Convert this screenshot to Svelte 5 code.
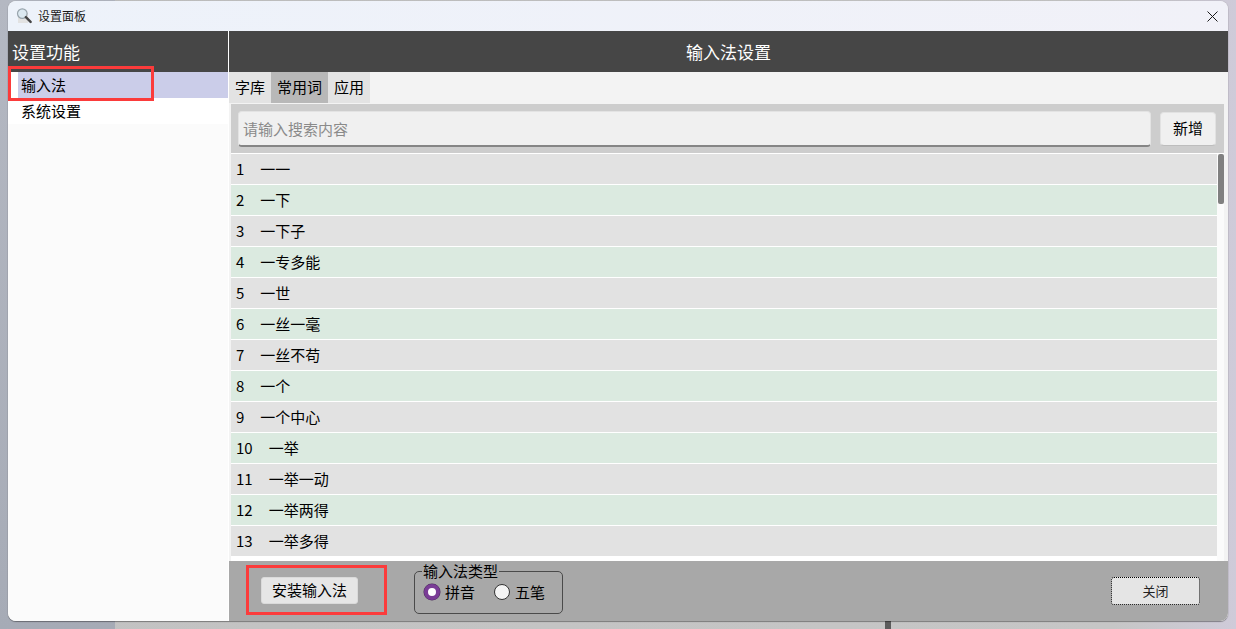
<script>
  const words = ['一一','一下','一下子','一专多能','一世','一丝一毫','一丝不苟','一个','一个中心','一举','一举一动','一举两得','一举多得'];
</script>

<div class="desk">
  <div class="bg-left"></div>
  <div class="stub"></div>
  <div class="window">
    <div class="titlebar">
      <svg class="appicon" viewBox="0 0 16 16" width="16" height="16" aria-hidden="true">
        <path d="M2 5h10v10H2z" fill="#e2e2e2"/>
        <circle cx="6.3" cy="5.6" r="4.8" fill="#dbe8f0" stroke="#98a4ac" stroke-width="1.2"/>
        <path d="M9.9 9.2 14.6 13.9" stroke="#454545" stroke-width="2.4" stroke-linecap="round"/>
      </svg>
      <span class="wintitle">设置面板</span>
      <svg class="closeicon" viewBox="0 0 11 11" width="11" height="11" aria-hidden="true">
        <path d="M.5.5 10.5 10.5M10.5.5.5 10.5" stroke="#1a1a1a" stroke-width="1" fill="none"/>
      </svg>
    </div>
    <div class="body">
      <aside class="side">
        <div class="sidehead">设置功能</div>
        <div class="navitem active"><span class="navlabel">输入法</span></div>
        <div class="navitem"><span class="navlabel">系统设置</span></div>
      </aside>
      <main class="main">
        <div class="mainhead">输入法设置</div>
        <div class="tabs">
          <div class="tab">字库</div>
          <div class="tab on">常用词</div>
          <div class="tab">应用</div>
        </div>
        <div class="panel">
          <div class="search">
            <div class="input">请输入搜索内容</div>
            <div class="addbtn">新增</div>
          </div>
          <div class="listwrap">
            <div class="list">
              {#each words as w, i}
                <div class="row" class:green={i % 2 === 1}><span class="num">{i + 1}</span><span>{w}</span></div>
              {/each}
            </div>
            <div class="scroll"><div class="thumb"></div></div>
          </div>
        </div>
        <div class="footer">
          <div class="install">安装输入法</div>
          <fieldset class="group">
            <legend>输入法类型</legend>
            <div class="radios">
              <div class="radio"><span class="dot checked"></span><span>拼音</span></div>
              <div class="radio"><span class="dot"></span><span>五笔</span></div>
            </div>
          </fieldset>
          <div class="closebtn">关闭</div>
        </div>
      </main>
    </div>
    <div class="mark mark1"></div>
    <div class="mark mark2"></div>
  </div>
</div>

<style>
  :global(body) {
    margin: 0;
    font-family: "Noto Sans CJK SC", "Noto Sans", sans-serif;
  }
  .desk {
    position: relative;
    width: 1236px;
    height: 629px;
    overflow: hidden;
    background: linear-gradient(90deg, #c2c2c2 0%, #c6c6c6 90%, #cfcbd9 100%);
    padding: 1px 8px 0;
    box-sizing: border-box;
  }
  .bg-left {
    position: absolute;
    left: 0;
    top: 0;
    width: 115px;
    height: 629px;
    background: linear-gradient(180deg, #b4b8c2, #a6abb6);
  }
  .stub {
    position: absolute;
    left: 885px;
    top: 620px;
    width: 6px;
    height: 9px;
    background: #5c5c5c;
  }
  .window {
    position: relative;
    width: 1220px;
    height: 620px;
    border-radius: 8px;
    overflow: hidden;
    background: #fbfbfb;
    box-shadow: 0 1px 1px rgba(0, 0, 0, .35), 0 0 1px rgba(0, 0, 0, .35);
    display: flex;
    flex-direction: column;
  }
  .titlebar {
    height: 30px;
    flex: none;
    display: flex;
    align-items: center;
    background: linear-gradient(90deg, #edf2fa, #f1f1f8);
    padding-left: 8px;
    box-sizing: border-box;
  }
  .appicon { flex: none; }
  .wintitle {
    margin-left: 6px;
    font-size: 12px;
    line-height: 26px;
    color: #1a1a1a;
  }
  .closeicon {
    margin-left: auto;
    margin-right: 10px;
  }
  .body {
    flex: 1;
    display: flex;
    min-height: 0;
  }
  .side {
    width: 220px;
    flex: none;
    border-right: 1px solid #fff;
    background: #fbfbfb;
  }
  .sidehead {
    height: 41px;
    background: #464646;
    color: #fff;
    font-size: 17px;
    line-height: 42px;
    padding-left: 4px;
  }
  .navitem {
    height: 26px;
    background: #fff;
    padding-left: 10px;
    font-size: 15px;
    line-height: 26px;
    color: #000;
  }
  .navlabel {
    display: block;
    padding-left: 3px;
  }
  .active .navlabel { background: #cbcde9; }
  .main {
    flex: 1;
    min-width: 0;
    display: flex;
    flex-direction: column;
    background: #f3f3f3;
  }
  .mainhead {
    height: 41px;
    flex: none;
    background: #464646;
    color: #fff;
    font-size: 17px;
    line-height: 42px;
    text-align: center;
  }
  .tabs {
    display: flex;
    height: 31px;
    flex: none;
  }
  .tab {
    width: 42px;
    background: #e3e3e3;
    font-size: 15px;
    line-height: 29px;
    text-align: center;
    color: #000;
  }
  .tab.on {
    width: 57px;
    background: #b8b8b8;
  }
  .panel {
    flex: none;
    height: 457px;
    margin: 1px 4px 0 2px;
    background: #fff;
    display: flex;
    flex-direction: column;
  }
  .search {
    height: 49px;
    flex: none;
    background: #cdcdcd;
    display: flex;
    align-items: center;
    padding: 0 8px 0 7px;
    box-sizing: border-box;
  }
  .input {
    flex: 1;
    height: 36px;
    background: #f0f0f0;
    border-radius: 4px;
    border: 1px solid #e3e3e3;
    border-bottom: 2px solid #858585;
    box-sizing: border-box;
    padding-left: 4px;
    font-size: 15px;
    line-height: 34px;
    color: #8a8a8a;
  }
  .addbtn {
    width: 56px;
    height: 34px;
    margin-left: 9px;
    background: #f0f0f0;
    border: 1px solid #e2e2e2;
    border-bottom-color: #bdbdbd;
    border-radius: 4px;
    box-sizing: border-box;
    font-size: 15px;
    line-height: 30px;
    text-align: center;
    color: #000;
  }
  .listwrap {
    flex: 1;
    margin-top: 1px;
    display: flex;
    min-height: 0;
  }
  .list {
    flex: 1;
    min-width: 0;
    display: flex;
    flex-direction: column;
    gap: 1px;
  }
  .row {
    height: 30px;
    flex: none;
    background: #e2e2e2;
    display: flex;
    align-items: flex-start;
    padding-left: 5px;
    box-sizing: border-box;
    font-size: 15px;
    line-height: 29px;
    color: #000;
  }
  .row.green { background: #dbeae0; }
  .num { margin-right: 16px; }
  .scroll {
    width: 7px;
    flex: none;
    background: #fbfbfb;
  }
  .thumb {
    width: 6px;
    height: 50px;
    margin-left: 1px;
    border-radius: 2px;
    background: #808080;
  }
  .footer {
    flex: 1;
    background: #a8a8a8;
    display: flex;
    align-items: flex-start;
  }
  .install {
    width: 97px;
    height: 27px;
    margin: 16px 0 0 32px;
    background: #e6e6e6;
    border: 1px solid #dadada;
    border-radius: 3px;
    box-sizing: border-box;
    font-size: 15px;
    line-height: 23px;
    text-align: center;
    color: #000;
  }
  .group {
    width: 149px;
    height: 50px;
    margin: 3px 0 0 56px;
    padding: 0 0 0 9px;
    border: 1px solid #4a4a4a;
    border-radius: 5px;
    box-sizing: border-box;
    min-inline-size: 0;
  }
  legend {
    padding: 0 1px;
    margin-left: -2px;
    font-size: 15px;
    line-height: 14px;
    color: #000;
  }
  .radios {
    display: flex;
    gap: 19px;
    margin-top: 4px;
  }
  .radio {
    display: flex;
    align-items: center;
    gap: 5px;
    font-size: 15px;
    line-height: 20px;
    color: #000;
  }
  .dot {
    width: 16px;
    height: 16px;
    border-radius: 50%;
    background: #f4f4f4;
    border: 1px solid #333;
    box-sizing: border-box;
  }
  .dot.checked {
    background: #fff;
    border: 4px solid #7a3d96;
    box-shadow: 0 0 0 .5px #4a2a5a;
  }
  .closebtn {
    width: 89px;
    height: 28px;
    margin: 16px 28px 0 auto;
    background: #e5e5e5;
    border: 1px dotted #000;
    border-radius: 3px;
    box-sizing: border-box;
    font-size: 13px;
    line-height: 25px;
    text-align: center;
    color: #222;
  }
  .mark {
    position: absolute;
    border: 3px solid #fb3b3b;
    box-sizing: border-box;
  }
  .mark1 { left: 0; top: 65px; width: 146px; height: 35px; }
  .mark2 { left: 238px; top: 564px; width: 141px; height: 50px; }
</style>
